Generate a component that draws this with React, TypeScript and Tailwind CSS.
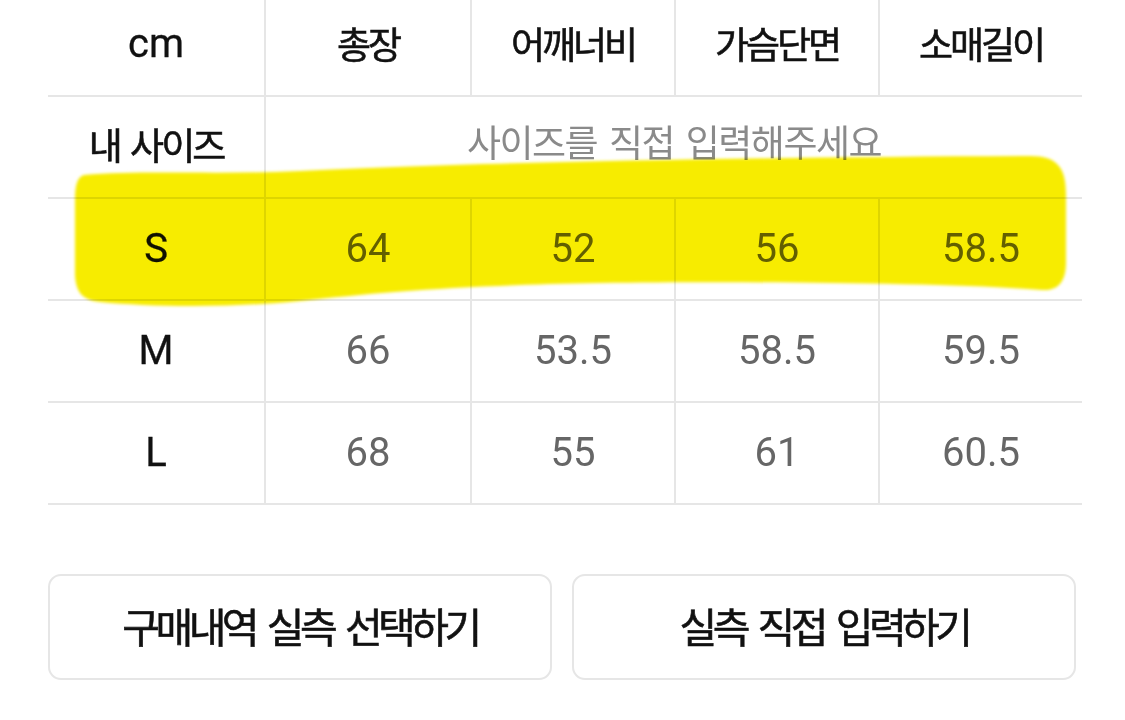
import React from "react";

const headers = ["총장", "어깨너비", "가슴단면", "소매길이"];
const rows: { size: string; vals: string[] }[] = [
  { size: "S", vals: ["64", "52", "56", "58.5"] },
  { size: "M", vals: ["66", "53.5", "58.5", "59.5"] },
  { size: "L", vals: ["68", "55", "61", "60.5"] },
];

const grid = "grid grid-cols-[218px_206px_204px_204px_202px]";
const kr = "font-['Noto_Sans_CJK_KR',sans-serif]";
const lat = "font-['Roboto','Noto_Sans_CJK_KR',sans-serif]";
const line = "border-[#e6e6e6]";
const semi = "font-normal [-webkit-text-stroke:0.6px_#111]";

function Cell({ children, right, className }: { children: React.ReactNode; right?: boolean; className: string }) {
  return (
    <div className={`flex items-center justify-center ${right ? `border-r-2 ${line}` : ""} ${className}`}>
      {children}
    </div>
  );
}

export default function App() {
  return (
    <div className="relative w-[1125px] h-[720px] bg-white overflow-hidden">
      <div className="ml-[48px] w-[1034px]">
        {/* header */}
        <div className={`${grid} h-[97px] border-b-2 ${line}`}>
          <Cell right className={`${lat} pb-[8px] text-[40px] text-[#111] [-webkit-text-stroke:0.3px_#111]`}>
            cm
          </Cell>
          {headers.map((h, i) => (
            <Cell
              key={h}
              right={i < 3}
              className={`${kr} ${semi} pb-[8px] text-[37px] tracking-[-3px] text-[#111]`}
            >
              {h}
            </Cell>
          ))}
        </div>

        {/* my size */}
        <div className={`${grid} h-[102px] border-b-2 ${line}`}>
          <Cell right className={`${kr} ${semi} pb-[4px] text-[37px] tracking-[-3px] [word-spacing:5px] text-[#111]`}>
            내 사이즈
          </Cell>
          <div
            className={`${kr} col-span-4 flex items-center justify-center pb-[10px] text-[37px] tracking-[-1.5px] [word-spacing:5px] text-[#8a8a8a]`}
          >
            사이즈를 직접 입력해주세요
          </div>
        </div>

        {rows.map((r) => (
          <div key={r.size} className={`${grid} h-[102px] border-b-2 ${line}`}>
            <Cell right className={`${lat} text-[40px] text-[#111] [-webkit-text-stroke:0.3px_#111]`}>
              {r.size}
            </Cell>
            {r.vals.map((v, i) => (
              <Cell key={i} right={i < 3} className={`${lat} text-[40px] text-[#666]`}>
                {v}
              </Cell>
            ))}
          </div>
        ))}
      </div>

      {/* buttons */}
      <div className="mt-[69px] ml-[48px] flex gap-[20px]">
        {["구매내역 실측 선택하기", "실측 직접 입력하기"].map((t) => (
          <button
            key={t}
            className={`${kr} ${semi} w-[504px] h-[106px] rounded-[13px] border-2 ${line} bg-white flex items-center justify-center pb-[2px] text-[41px] tracking-[-4.5px] [word-spacing:7px] text-[#111]`}
          >
            {t}
          </button>
        ))}
      </div>

      {/* highlighter stroke */}
      <svg
        className="absolute left-0 top-0 pointer-events-none mix-blend-multiply"
        width="1125"
        height="720"
        viewBox="0 0 1125 720"
      >
        <defs>
          <filter id="soft" x="-5%" y="-20%" width="110%" height="140%">
            <feGaussianBlur stdDeviation="1.6" />
          </filter>
        </defs>
        <path
          filter="url(#soft)"
          fill="#f7ec00"
          d="M 84 175
             C 140 170, 220 175, 300 171
             C 450 163, 750 157, 1030 156
             C 1058 156, 1066 168, 1066 195
             L 1066 262
             C 1066 282, 1058 291, 1042 290
             C 950 283, 750 281, 600 283
             C 470 285, 380 292, 300 301
             C 230 308, 150 307, 100 302
             C 82 300, 76 292, 75 275
             L 75 200
             C 75 186, 77 177, 84 175 Z"
        />
      </svg>
    </div>
  );
}
